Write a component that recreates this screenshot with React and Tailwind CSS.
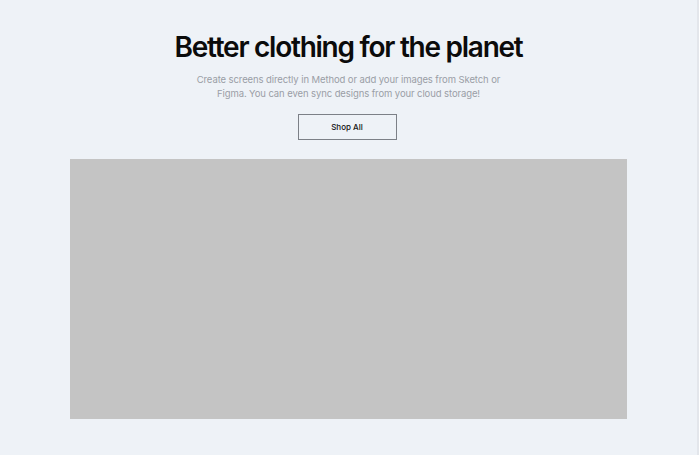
import React from "react";

function App() {
  return (
    <div className="min-h-[455px] w-full bg-[#eef2f7] border-r-2 border-[#e3e6eb] flex flex-col items-center pt-[30px] pb-[36px] font-['Inter',sans-serif]">
      <h1 className="text-[28px] leading-[34px] font-semibold tracking-[-0.045em] text-[#0b0b0b]">
        Better clothing for the planet
      </h1>
      <p className="mt-[9px] w-[320px] text-center text-[9.5px] leading-[14px] tracking-[-0.01em] text-[#9a9ea6]">
        Create screens directly in Method or add your images from Sketch or
        Figma. You can even sync designs from your cloud storage!
      </p>
      <button
        type="button"
        className="mt-[13px] mr-[3px] w-[99px] h-[26px] border border-[#7c8087] bg-transparent text-[8px] font-medium text-[#111]"
      >
        Shop All
      </button>
      {/* hero image placeholder */}
      <div className="mt-[19px] w-[557px] h-[260px] bg-[#c4c4c4]" />
    </div>
  );
}

export default App;
